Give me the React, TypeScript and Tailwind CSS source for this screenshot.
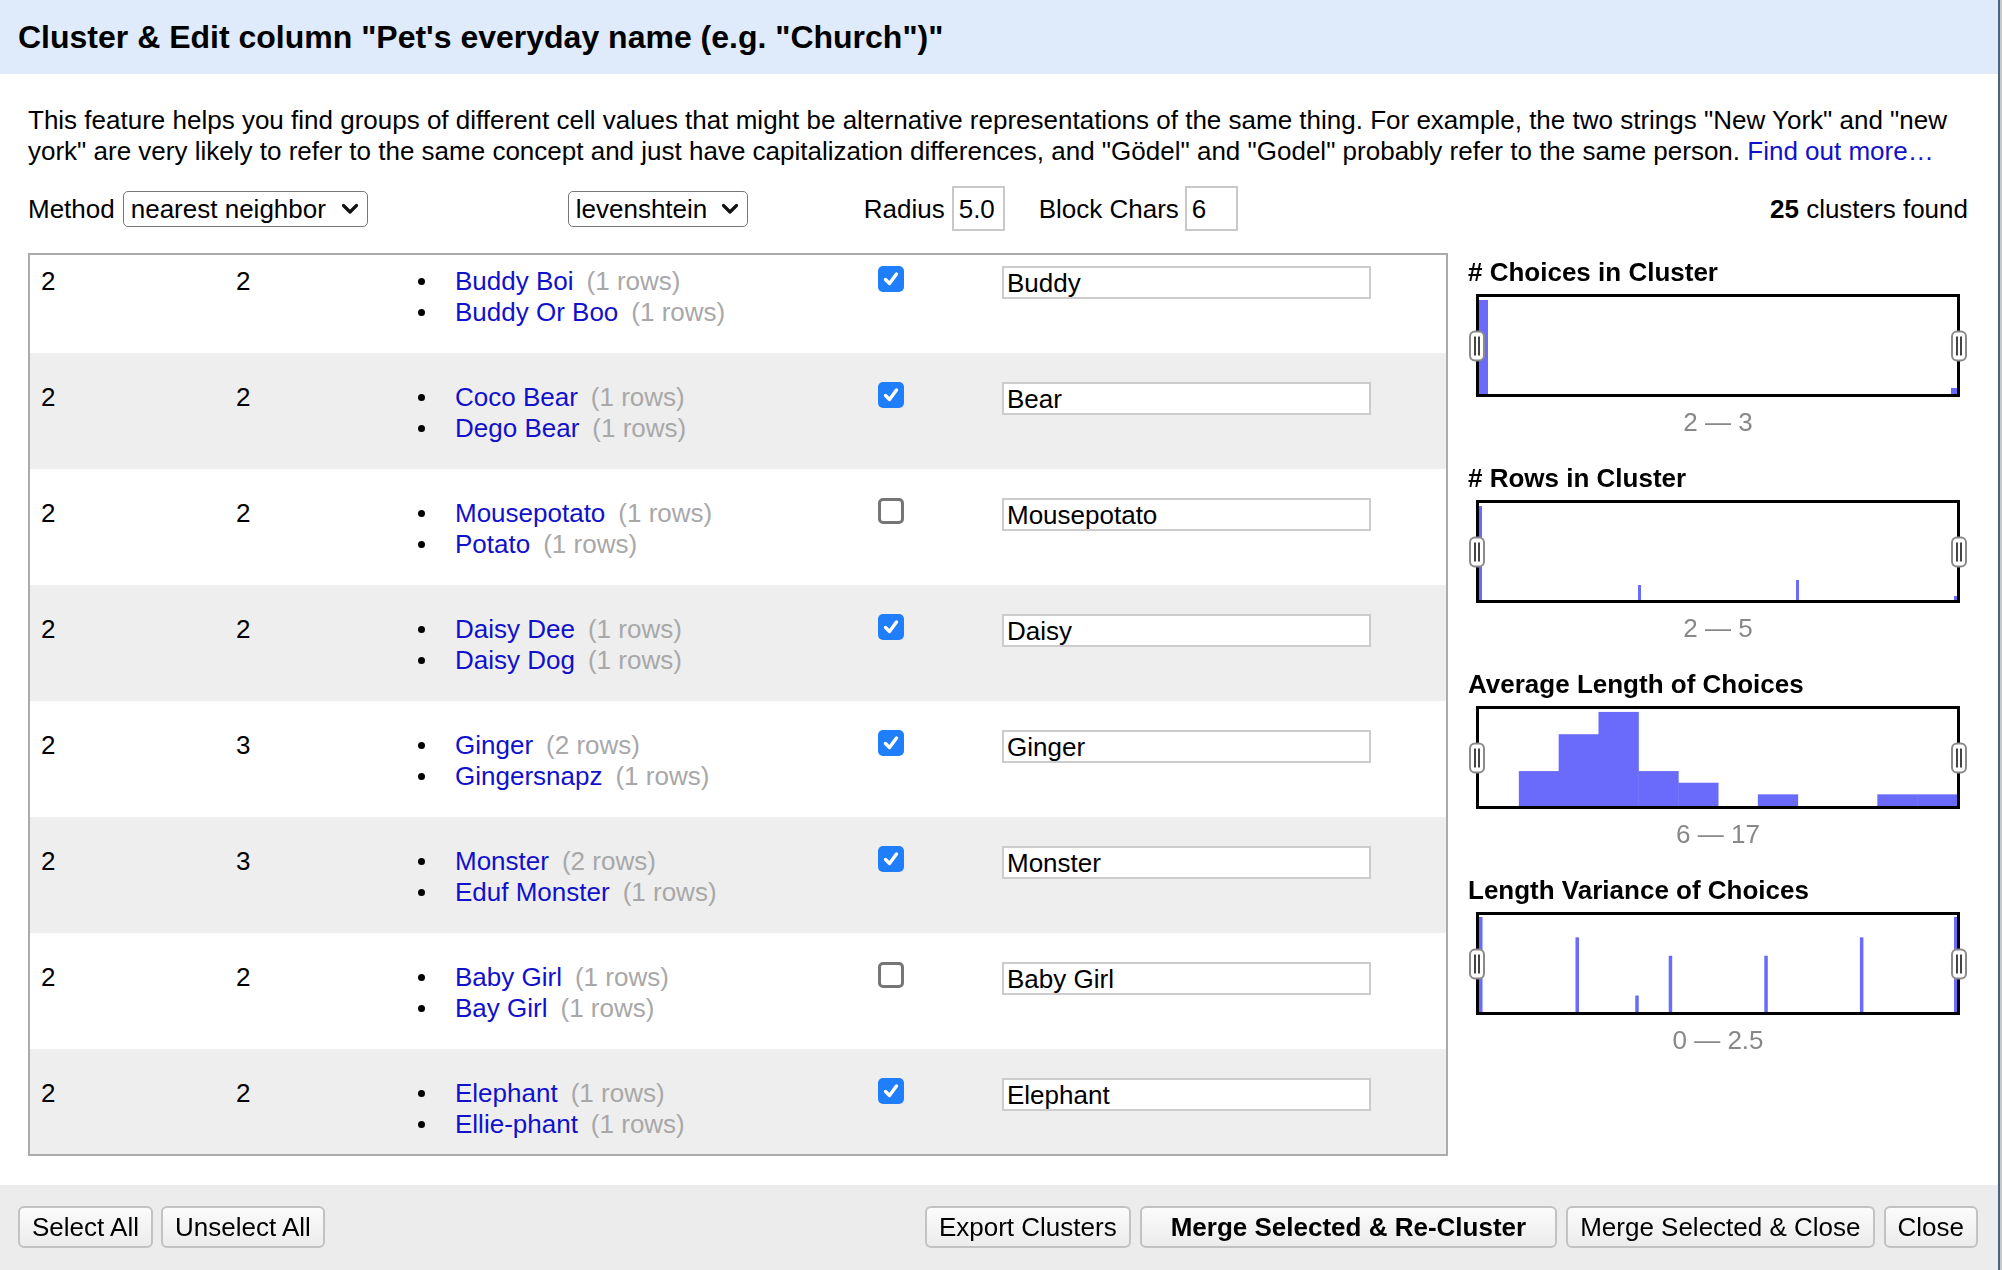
import React, { useLayoutEffect, useRef } from "react";

type Row = {
  a: number;
  b: number;
  items: [string, number][];
  checked: boolean;
  value: string;
};

const rows: Row[] = [
  { a: 2, b: 2, items: [["Buddy Boi", 1], ["Buddy Or Boo", 1]], checked: true, value: "Buddy" },
  { a: 2, b: 2, items: [["Coco Bear", 1], ["Dego Bear", 1]], checked: true, value: "Bear" },
  { a: 2, b: 2, items: [["Mousepotato", 1], ["Potato", 1]], checked: false, value: "Mousepotato" },
  { a: 2, b: 2, items: [["Daisy Dee", 1], ["Daisy Dog", 1]], checked: true, value: "Daisy" },
  { a: 2, b: 3, items: [["Ginger", 2], ["Gingersnapz", 1]], checked: true, value: "Ginger" },
  { a: 2, b: 3, items: [["Monster", 2], ["Eduf Monster", 1]], checked: true, value: "Monster" },
  { a: 2, b: 2, items: [["Baby Girl", 1], ["Bay Girl", 1]], checked: false, value: "Baby Girl" },
  { a: 2, b: 2, items: [["Elephant", 1], ["Ellie-phant", 1]], checked: true, value: "Elephant" },
];

const FONT = { fontFamily: '"Liberation Sans", Arial, Helvetica, sans-serif' };

function Checkbox({ checked }: { checked: boolean }) {
  if (checked) {
    return (
      <div className="w-[26px] h-[26px] rounded-[5px] bg-[#1f7ffb] flex items-center justify-center">
        <svg width="18" height="18" viewBox="0 0 18 18">
          <polyline points="3.5,9.5 7.5,13.5 14.5,4" fill="none" stroke="white" strokeWidth="3.4" strokeLinecap="round" strokeLinejoin="round" />
        </svg>
      </div>
    );
  }
  return <div className="w-[26px] h-[26px] rounded-[5px] border-[3px] border-[#767676] bg-white" />;
}

function Chevron() {
  return (
    <svg width="18" height="12" viewBox="0 0 18 12">
      <polyline points="2.5,2.5 9,9 15.5,2.5" fill="none" stroke="#111" strokeWidth="3.2" strokeLinecap="round" strokeLinejoin="round" />
    </svg>
  );
}

function Handle({ side }: { side: "left" | "right" }) {
  return (
    <div
      className={
        "absolute top-1/2 -translate-y-1/2 w-[16px] h-[31px] bg-white border-2 border-[#8a8a8a] rounded-[6px] flex items-center justify-center gap-[2px] " +
        (side === "left" ? "left-[-10px]" : "right-[-10px]")
      }
    >
      <div className="w-[2px] h-[19px] bg-[#444]" />
      <div className="w-[2px] h-[19px] bg-[#444]" />
    </div>
  );
}

const BLUE = "#6b6bfb";

function Histogram({ children }: { children: React.ReactNode }) {
  return (
    <div className="relative ml-[8px] w-[484px] h-[103px] border-[3px] border-black bg-white">
      <svg className="block w-full h-full" viewBox="0 0 478 97" preserveAspectRatio="none">
        {children}
      </svg>
      <Handle side="left" />
      <Handle side="right" />
    </div>
  );
}

function ChoicesHist() {
  return (
    <Histogram>
      <rect x="0" y="3" width="9" height="94" fill={BLUE} />
      <rect x="472" y="91" width="6" height="6" fill={BLUE} />
    </Histogram>
  );
}

function RowsHist() {
  return (
    <Histogram>
      <rect x="0" y="3" width="3" height="94" fill={BLUE} />
      <rect x="159" y="82" width="3" height="15" fill={BLUE} />
      <rect x="317" y="77" width="3" height="20" fill={BLUE} />
      <rect x="475" y="93" width="3" height="4" fill={BLUE} />
    </Histogram>
  );
}

function AvgHist() {
  const h = [0, 36, 74, 97, 36, 24, 0, 12, 0, 0, 12, 12];
  const w = 478 / 12;
  return (
    <Histogram>
      {h.map((v, i) =>
        v > 0 ? (
          <rect key={i} x={i * w} y={97 - (v / 100) * 97} width={w + 0.5} height={(v / 100) * 97} fill={BLUE} />
        ) : null
      )}
    </Histogram>
  );
}

function VarHist() {
  const lines: [number, number][] = [
    [0, 98],
    [20.5, 77],
    [33, 17],
    [40, 58],
    [60, 58],
    [80, 77],
    [100, 98],
  ];
  return (
    <Histogram>
      {lines.map(([p, v], i) => {
        const x = Math.min(475, Math.max(0, (p / 100) * 478 - 1.5));
        return <rect key={i} x={x} y={97 - (v / 100) * 97} width="3.5" height={(v / 100) * 97} fill={BLUE} />;
      })}
    </Histogram>
  );
}

function Facet({ title, range, children }: { title: string; range: string; children: React.ReactNode }) {
  return (
    <div className="flex flex-col">
      <div className="font-bold text-[26px] leading-[31px] text-black">{title}</div>
      <div className="mt-[6px]">{children}</div>
      <div className="mt-[10px] ml-[8px] w-[484px] text-center text-[26px] leading-[31px] text-[#888]">{range}</div>
    </div>
  );
}

function Button({ children, bold }: { children: React.ReactNode; bold?: boolean }) {
  return (
    <div
      className={
        "h-[42px] flex items-center border-2 border-[#c2c2c2] rounded-[6px] bg-gradient-to-b from-[#fbfbfb] to-[#ececec] text-[26px] leading-[30px] text-black " +
        (bold ? "font-bold px-[29px]" : "px-[12px]")
      }
    >
      {children}
    </div>
  );
}

export default function App() {
  const scrollRef = useRef<HTMLDivElement>(null);
  useLayoutEffect(() => {
    if (scrollRef.current) scrollRef.current.scrollTop = 18;
  }, []);

  return (
    <div className="w-[2002px] h-[1270px] overflow-hidden flex bg-[#c9c9c9]" style={FONT}>
      <div className="w-[1998px] h-full flex flex-col bg-white text-black">
        {/* header */}
        <div className="h-[74px] shrink-0 bg-[#dfeafb] flex items-center pl-[18px]">
          <div className="font-bold text-[32px] leading-[37px]">Cluster &amp; Edit column "Pet's everyday name (e.g. "Church")"</div>
        </div>

        {/* body */}
        <div className="flex-1 px-[28px] flex flex-col">
          <p className="pt-[31px] text-[26px] leading-[31px]">
            This feature helps you find groups of different cell values that might be alternative representations of the same thing. For example, the two strings "New York" and "new york" are very likely to refer to the same concept and just have capitalization differences, and "Gödel" and "Godel" probably refer to the same person.{" "}
            <span className="text-[#1111cc]">Find out more…</span>
          </p>

          {/* controls */}
          <div className="mt-[19px] h-[45px] flex items-center text-[26px] leading-[30px]">
            <span>Method</span>
            <div className="ml-[8px] w-[245px] h-[36px] flex items-center justify-between pl-[7px] pr-[8px] border-[1.5px] border-[#777] rounded-[5px] bg-white">
              <span>nearest neighbor</span>
              <Chevron />
            </div>
            <div className="ml-[200px] w-[180px] h-[36px] flex items-center justify-between pl-[7px] pr-[8px] border-[1.5px] border-[#777] rounded-[5px] bg-white">
              <span>levenshtein</span>
              <Chevron />
            </div>
            <span className="ml-[116px]">Radius</span>
            <div className="ml-[7px] w-[53px] h-[45px] border-2 border-[#c9c9c9] flex items-center pl-[5px]">5.0</div>
            <span className="ml-[34px]">Block Chars</span>
            <div className="ml-[6px] w-[53px] h-[45px] border-2 border-[#c9c9c9] flex items-center pl-[5px]">6</div>
            <span className="ml-auto mr-[2px]">
              <b>25</b> clusters found
            </span>
          </div>

          {/* main */}
          <div className="mt-[22px] flex">
            <div className="w-[1420px] h-[903px] border-2 border-[#ababab] flex flex-col">
              <div ref={scrollRef} className="flex-1 overflow-y-auto [scrollbar-width:none]">
                {rows.map((r, i) => (
                  <div
                    key={i}
                    className={"h-[116px] flex items-start pt-[29px] text-[26px] leading-[31px] " + (i % 2 === 1 ? "bg-[#eeeeee]" : "bg-white")}
                  >
                    <div className="w-[206px] pl-[11px]">{r.a}</div>
                    <div className="w-[185px]">{r.b}</div>
                    <div className="w-[457px] flex flex-col">
                      {r.items.map(([name, n], j) => (
                        <div key={j} className="h-[31px] flex items-center">
                          <span className="w-[7px] h-[7px] rounded-full bg-black ml-[-3px] mr-[30px]" />
                          <span className="text-[#1111cc]">{name}</span>
                          <span className="ml-[13px] text-[#a8a8a8]">({n} rows)</span>
                        </div>
                      ))}
                    </div>
                    <div className="w-[124px]">
                      <Checkbox checked={r.checked} />
                    </div>
                    <div className="w-[369px] h-[33px] border-2 border-[#cccccc] bg-white flex items-center pl-[3px] leading-none">
                      {r.value}
                    </div>
                  </div>
                ))}
              </div>
            </div>

            <div className="flex-1 pl-[20px] pt-[4px] flex flex-col gap-[25px]">
              <Facet title="# Choices in Cluster" range="2 — 3">
                <ChoicesHist />
              </Facet>
              <Facet title="# Rows in Cluster" range="2 — 5">
                <RowsHist />
              </Facet>
              <Facet title="Average Length of Choices" range="6 — 17">
                <AvgHist />
              </Facet>
              <Facet title="Length Variance of Choices" range="0 — 2.5">
                <VarHist />
              </Facet>
            </div>
          </div>
        </div>

        {/* footer */}
        <div className="h-[85px] shrink-0 bg-[#ececec] flex items-center pl-[18px] pr-[20px] pb-[1px]">
          <div className="flex gap-[8px]">
            <Button>Select All</Button>
            <Button>Unselect All</Button>
          </div>
          <div className="ml-auto flex gap-[9px]">
            <Button>Export Clusters</Button>
            <Button bold>Merge Selected &amp; Re-Cluster</Button>
            <Button>Merge Selected &amp; Close</Button>
            <Button>Close</Button>
          </div>
        </div>
      </div>
      <div className="w-[2px] h-full bg-[#4a6480]" />
    </div>
  );
}
